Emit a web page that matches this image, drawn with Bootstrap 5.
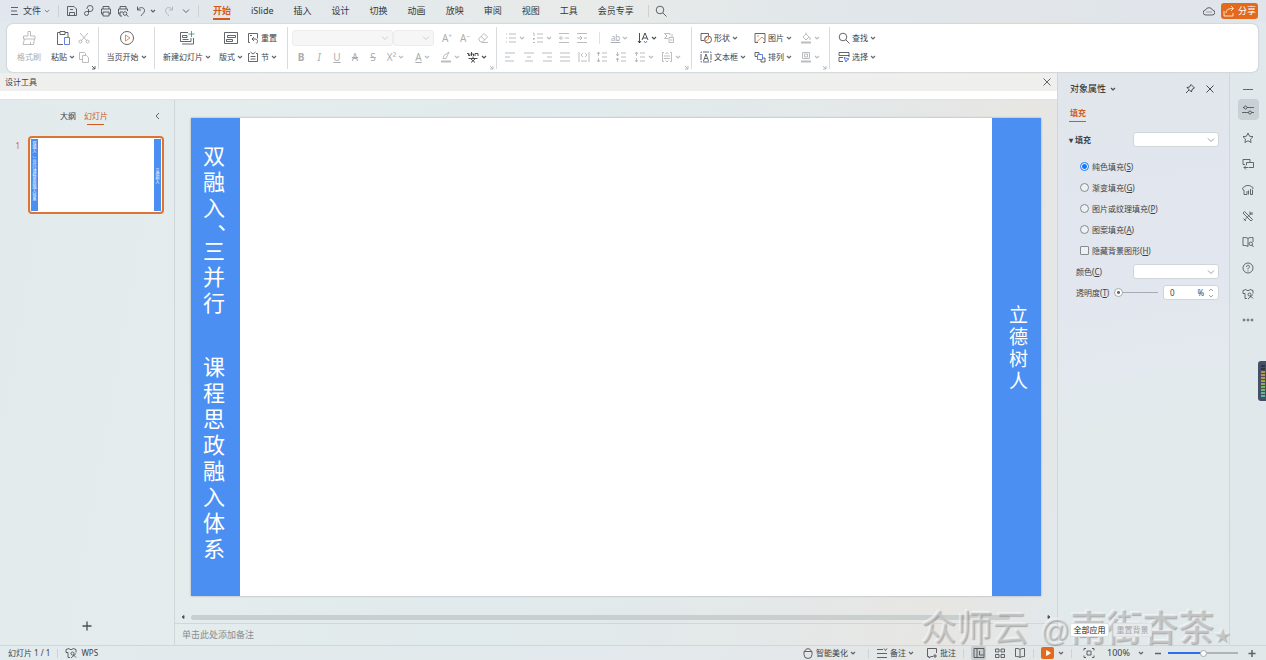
<!DOCTYPE html>
<html lang="zh-CN">
<head>
<meta charset="utf-8">
<meta name="viewport" content="width=device-width, initial-scale=1">
<title>WPS 演示</title>
<link rel="stylesheet" href="https://cdn.jsdelivr.net/npm/bootstrap@5.3.0/dist/css/bootstrap.min.css">
<style>
:root{--ink:#3d4247;--line:#d0d6da;--accent:#d05a1c;--blue:#4c8ff2}
body{font-family:"Noto Sans","Noto Sans CJK SC",sans-serif;font-size:8px;line-height:12px;color:var(--ink);
 background:linear-gradient(100deg,#e3eaed 0,#e4ecec 20%,#e1eaec 45%,#e4e8e9 62%,#e7e6e3 76%,#e1e8ec 86%,#e1e9eb 100%)}
button,input,select{font:inherit;color:inherit;line-height:inherit}
button{background:none;border:0;padding:0;display:inline-flex;align-items:center;justify-content:center;white-space:nowrap}
a{color:inherit;text-decoration:none}
svg{fill:none;stroke:currentColor;stroke-width:1;stroke-opacity:.8;flex:none;display:block}
.i12{width:12px;height:12px}.i14{width:14px;height:14px}.i16{width:16px;height:16px}.car{width:6px;height:6px}
.topbar{height:22px;font-size:9px;background:linear-gradient(90deg,#e2e6ee,#e2e8ec 25%,#e8ebe8 46%,#e2e7ea 62%,#e0e4eb)}
.topbar button{width:17px;height:20px}
.topbar .vline{width:1px;height:12px;background:#cbd1d6}
.topbar .filebtn{gap:3px}
.tab-link{padding:5px 10px 0;height:22px;position:relative;color:#34383c}
.tab-link.active,.pane-tab.active{color:var(--accent);font-weight:700}
.tab-link.active::after,.pane-tab.active::after{content:"";position:absolute;left:50%;bottom:2px;width:17px;height:2px;margin-left:-9px;background:var(--accent)}
.topbar .share{width:37px;height:16px;background:#e36a1c;color:#fff;border-radius:3px;gap:3px}
.ribbon{margin:2px 8px 1px 7px;height:48px;background:#fff;border-radius:6px;box-shadow:0 0 2px #aab0b5;position:relative;z-index:2}
.grp{border-right:1px solid #d9dcde;margin:3px 0;position:relative;padding-top:1px}
.grp:last-child{border:0}
.grp .launch{position:absolute;right:2px;bottom:-1px;width:5px;height:5px}
.rowx{height:19px;display:flex;align-items:center}
.stack{flex-direction:column;height:38px}
.stack>*{height:19px;display:flex;align-items:center;gap:2px}
.brushcmd{width:44px}
.c18{width:18px}.c27{width:27px;gap:2px}.dim{color:#aaadaf}
.lbl{gap:2px}.fill-row{width:129px}.shapes{width:54px}.glyphs{font-size:10px}
.g1{width:92px}.g2{width:56px}.g3{width:133px}.g4{width:209px}.g5{width:195px}.g6{width:138px}
.combo{appearance:none;height:16px;background:#f6f6f6;border:1px solid #ececec;border-radius:3px;width:100%}
.pick{position:relative}.pick svg{position:absolute;right:4px;top:50%;margin-top:-4px;width:8px;height:8px;color:#888}
.grp .pick svg{color:#c4c6c8}
.font-pick{width:101px}.size-pick{width:41px}
.designbar{height:18px;background:#efefee;padding:0 4px 0 5px}
.designstrip{height:9px;background:#fff;border-bottom:1px solid #dfe3e5}
.thumbs{width:175px;border-right:1px solid var(--line)}
.pane-tabs{padding:10px 10px 0 60px}
.pane-tab{position:relative;padding-bottom:6px}.pane-tab.active{font-weight:400}
.pane-tab.active::after{height:1px;bottom:3px}
.thumb-no{width:20px;color:var(--accent)}
.thumb{width:136px;height:78px;border:2px solid #dc7434;border-radius:4px;background:#fff;padding:1px}
.thumb i{display:block;width:7px;background:var(--blue);color:#fff;font-style:normal;font-size:4px;line-height:4px;text-align:center;padding-top:3px}
.thumb i span{display:block;width:4px;margin:0 auto;line-break:anywhere}
.canvas-area{padding:18px 16px 0}
.slide{aspect-ratio:850/478;background:#fff;box-shadow:0 0 2px #9aa3a8}
.band{width:49px;background:var(--blue);color:#fff}
.vtxt{width:22px;margin:0 15px 0 12px;font-size:22px;line-height:26px;line-break:anywhere}
.vtxt p{margin:0}.vtxt .pause{writing-mode:vertical-rl;line-height:22px;width:22px;height:17px;padding-top:4px}.vtxt .later{margin-top:38px}
.vtxt.small-v{width:20px;font-size:19px;line-height:22px;margin:0 13px 18px 17px}
.hbar{height:12px;padding:0 5px}.hbar .grip{height:5px;border-radius:3px;background:#c9cecf;width:819px;max-width:95%;margin-left:5px}
.notes{height:22px;border:0;border-top:1px solid var(--line);background:none;font-size:9px;padding:0 7px;width:100%}
.notes::placeholder{color:#888e91;opacity:1}
.props{width:172px;border-left:1px solid var(--line);background:linear-gradient(170deg,#e1e6ed,#e2e6ef 35%,#e3eaec 60%,#e1e9eb)}
.props-head{font-size:9px;color:#222;padding:10px 9px 0 12px}
.rail{width:37px;border-left:1px solid var(--line);background:#e1e8ec;padding-top:5px}
.rail button{width:21px;height:21px;border-radius:4px;margin-bottom:5px;color:#44494e}
.rail button.first{margin:0}
.rail button.on{background:#cbd0d6;margin-bottom:7px}
.opts{padding-top:6px}
.opt{height:21px;gap:3px;padding-left:22px}
.opt input{appearance:none;width:9px;height:9px;border:1px solid #858b91;border-radius:50%;margin:0;background:#edf1f3}
.opt input[type=checkbox]{border-radius:1px}
.opt input:checked{border-color:#1677ff;background:radial-gradient(circle,#1677ff 0 2px,#fff 3px)}
.field{height:21px;padding:0 10px 0 18px}.field.sub{padding-left:11px}
.box{appearance:none;height:15px;border:1px solid #cfd5d9;border-radius:3px;background:#fff;width:100%;display:block}
.pct{padding:0 6px;white-space:pre}
.pick .spin{height:12px;margin-top:-6px}
.w86{width:86px}.w56{width:56px}
.trans,.zoomer{appearance:none;height:9px;background:linear-gradient(#a6adb2,#a6adb2) center/100% 1px no-repeat;margin:0}
.trans{width:44px}.zoomer{width:70px;background:linear-gradient(90deg,#2d6fe8 50%,#aeb4b8 50%) center/100% 2px no-repeat}
.trans::-webkit-slider-thumb,.zoomer::-webkit-slider-thumb{appearance:none;width:9px;height:9px;border:1px solid #aaa;border-radius:50%;background:radial-gradient(circle,#666 0 1px,#fff 2px)}
.zoomer::-webkit-slider-thumb{width:7px;height:7px;background:#fff}
.apply{height:14px;width:39px;background:#fff;border:1px solid #dce1e4;border-radius:2px;color:#222}
.apply:disabled{background:#e7ebec;color:#a4a9ac}
.apply-row{position:relative;z-index:6}
.status{height:15px;border-top:1px solid var(--line);background:linear-gradient(90deg,#e2ebed,#e3e9ec 50%,#e4e6e6 75%,#e0e8ea)}
.status .vline{width:1px;height:9px;background:#ccd2d5;margin:0 7px}
.status .on{background:#c6cbcd;height:14px;width:15px;border-radius:2px}
.status .play{background:#e36a1c;color:#fff;width:13px;height:12px;border-radius:2px}
.pct-label{font-size:9px}
.wm{position:absolute;right:36px;bottom:4px;z-index:5;pointer-events:none;font-size:36px;line-height:40px;color:rgba(222,222,222,.45);text-shadow:1px 1px 1px rgba(110,110,110,.5),-1px -1px 0 rgba(250,250,250,.6);white-space:nowrap}
.wm .sign{margin-left:12px;font-weight:500;font-family:"Liberation Sans","Noto Sans CJK SC",sans-serif}
.wm .at{font-size:29px;font-weight:400}.wm .star{font-size:16px}
.meter{position:absolute;right:0;top:361px;width:8px;height:40px;background:#465064;border-radius:3px 0 0 3px;z-index:5;padding:4px 1px 4px 3px}
.meter::before{content:"";display:block;height:32px;background:repeating-linear-gradient(transparent 0 2px,#465064 2px 3px),linear-gradient(#2e3546 18%,#c08a4a 19%,#b0a04a 45%,#7fb35c 68%,#42c3ae)}
</style>
</head>
<body class="vh-100 d-flex flex-column overflow-hidden position-relative">
<svg width="0" height="0" class="position-absolute" aria-hidden="true">
<symbol id="car" viewBox="0 0 6 6"><path d="M1 2l2 2 2-2" stroke-width="1.2"/></symbol>
<symbol id="chev" viewBox="0 0 8 8"><path d="M1 2.500l3 3 3-3"/></symbol>
<symbol id="launch" viewBox="0 0 5 5"><path d="M1 1l3 3M4 1v3H1"/></symbol>
<symbol id="menu" viewBox="0 0 12 12"><path d="M3 2.500h7M3 6h6M3 9.500h7"/></symbol>
<symbol id="save" viewBox="0 0 12 12"><path d="M1.500 1.500h6.500l2.500 2.500v6.500h-9zM3.500 10.500v-3h5v3M4 4.500h3"/></symbol>
<symbol id="pdf" viewBox="0 0 12 12"><path d="M4 4V3.500A3 3 0 1 1 7 6.500H3.500a2 2 0 1 0 2 2V4"/></symbol>
<symbol id="print" viewBox="0 0 12 12"><path d="M3 4V1.500h6V4M3 9H1.500V4h9v5H9M3 7h6v4H3z"/></symbol>
<symbol id="preview" viewBox="0 0 12 12"><path d="M3 4V1.500h6V4M3 9H1.500V4h9v2M3 11V7h3M5 11H3"/><circle cx="8" cy="8.500" r="1.800"/><path d="M9.500 10l2 1.500"/></symbol>
<symbol id="undo" viewBox="0 0 12 12"><path d="M2.500 1.500v3.500H6M2.500 5c2-3.500 7-3 7 .5C9.500 8 7 9 6 11"/></symbol>
<symbol id="search" viewBox="0 0 12 12"><circle cx="5" cy="5" r="3.800"/><path d="M8 8l3.500 3.500"/></symbol>
<symbol id="cloud" viewBox="0 0 12 12"><path d="M3 10a2.500 2.500 0 0 1-.5-5 3.800 3.800 0 0 1 7 0A2.500 2.500 0 0 1 9 10z"/><path d="M3.500 7h1M5.500 7h1M7.500 7h1"/></symbol>
<symbol id="share" viewBox="0 0 12 12"><path d="M1 6v5h9V8M3 8c0-3 2-4.500 7-4.500M8 1l2.500 2.500L8 6"/></symbol>
<symbol id="brush" viewBox="0 0 16 16"><path d="M7 1.500h2.500V6h4.500v3H2.500V6H7zM3.500 9L2 14.500h10.500L13.500 9M9.500 12v2.500"/></symbol>
<symbol id="paste" viewBox="0 0 16 16"><path d="M8 14.500H2.500v-12H5M10 2.500h3V7M5 1.500h5v3H5z"/><path stroke="#3d63d8" d="M9.500 7.500h5v7h-5z"/></symbol>
<symbol id="cut" viewBox="0 0 12 12"><path d="M2 1l7 8M10 1L3 9"/><circle cx="2.500" cy="9.500" r="1.500"/><circle cx="9.500" cy="9.500" r="1.500"/></symbol>
<symbol id="copy" viewBox="0 0 12 12"><path d="M4 8.500H1.500v-7h5l1 1V4M4.500 4.500h4l2 2v5h-6z"/></symbol>
<symbol id="playc" viewBox="0 0 16 16"><circle cx="8" cy="8" r="6.500"/><path stroke="#e0703a" d="M6.500 5v6l4.500-3z"/></symbol>
<symbol id="newslide" viewBox="0 0 16 16"><path d="M9 2.500H1.500v9h10.500V8M3.500 5.500H8v2H3.500zM3.500 9.500h6M3 14h11.500V8"/><path stroke="#209a63" d="M12.500 1v6M9.500 4h6"/></symbol>
<symbol id="layout" viewBox="0 0 16 16"><path d="M1.500 2.500h13v11h-13zM4.500 5.500h8v2h-8zM3.500 9.500h6v2h-6z"/></symbol>
<symbol id="reset" viewBox="0 0 12 12"><path d="M3 10.500H1.500v-9h9v5M3 3.500h2M7 5L5 7l2 2M5 7h3c3 0 3 3 1.500 4.500"/></symbol>
<symbol id="section" viewBox="0 0 12 12"><path d="M3 2.500H1.500v8h9v-8H9M3.500 1L6 3l2.500-2M3.500 5.500h5M3.500 8h5"/></symbol>
<symbol id="eraser" viewBox="0 0 12 12"><path d="M1.500 7L7 1.500l3.500 3.500L5.500 10h-2zM4 4.500L8 8M5 10.500h6"/></symbol>
<symbol id="bul" viewBox="0 0 12 12"><path d="M4 2h7M4 6h7M4 10h7M1 2h1M1 6h1M1 10h1"/></symbol>
<symbol id="num" viewBox="0 0 12 12"><path d="M5 2h6M5 6h6M5 10h6M1 1h1v3M1 6.500h2L1 8M1 10.500h2"/></symbol>
<symbol id="out" viewBox="0 0 12 12"><path d="M1 1.500h10M7 6h4M1 10.500h10M5.500 6H1.500M3.500 4l-2 2 2 2"/></symbol>
<symbol id="ind" viewBox="0 0 12 12"><path d="M1 1.500h10M8 6h3M1 10.500h10M1 6h5M4 4l2 2-2 2"/></symbol>
<symbol id="al" viewBox="0 0 12 12"><path d="M1 2h10M1 6h5M1 10h9"/></symbol>
<symbol id="ac" viewBox="0 0 12 12"><path d="M1 2h10M4 6h4M2 10h8"/></symbol>
<symbol id="ar" viewBox="0 0 12 12"><path d="M1 2h10M6 6h5M2 10h9"/></symbol>
<symbol id="aj" viewBox="0 0 12 12"><path d="M1 2h10M1 6h10M1 10h10"/></symbol>
<symbol id="memo" viewBox="0 0 12 12"><path d="M1 2.500h6M1 6.500h10M1 10.500h10M8 1.500l1.500 2 1.500-2"/></symbol>
<symbol id="ad" viewBox="0 0 12 12"><path d="M1 1v10M11 1v10M3 10h6M5 2L3 4l2 2M7 2l2 2-2 2"/></symbol>
<symbol id="lsp" viewBox="0 0 12 12"><path d="M6 2h5M6 6h5M6 10h5M2.500 1v4M1 3l1.500-2L4 3M2.500 7v4M1 9l1.500 2L4 9"/></symbol>
<symbol id="lsq" viewBox="0 0 12 12"><path d="M6 2h5M6 6h5M6 10h5M2.500 1v4M1 3l1.500 2L4 3M2.500 7v4M1 9l1.500-2L4 9"/></symbol>
<symbol id="conv" viewBox="0 0 12 12"><path d="M7 3V1.500H1.500L4 4 1.500 6.500H5M6 5.500h4.500v5H6zM9 2v3M7 8h2.500"/></symbol>
<symbol id="brk" viewBox="0 0 12 12"><path d="M3 1.500H1.500v9H3M9 1.500h1.500v9H9M3 5h6M3 7.500h6M4.500 3L6 1.500 7.500 3M4.500 9.500L6 11l1.500-1.500"/></symbol>
<symbol id="shape" viewBox="0 0 12 12"><path d="M4 8.500H1v-7h7.500V4"/><circle cx="8" cy="7.500" r="3.500"/><path stroke="#e0703a" d="M8.500 3.500V7L5 9.500V7z"/></symbol>
<symbol id="pic" viewBox="0 0 12 12"><path d="M4 10.500H1v-9h10v9H9"/><path stroke="#e0703a" d="M2.500 10L8 5l3 3M3 4h2"/></symbol>
<symbol id="tbox" viewBox="0 0 12 12"><path d="M3.500 10L6 3l2.500 7M4.500 7.500h3"/><path d="M1 3v6M11 3v6M3 1h6M3 11h6"/><path stroke="#3d63d8" d="M1 2V1h1M10 1h1v1M1 10v1h1M10 11h1v-1"/></symbol>
<symbol id="arr" viewBox="0 0 12 12"><path d="M3 5.500H1v-4h4V3M9 7h2v4H7V9"/><path stroke="#3d63d8" d="M3.500 3.500h5v5h-5z"/></symbol>
<symbol id="bucket" viewBox="0 0 12 12"><path d="M3 5l3-3 3 3-3 3zM6 2V.5M10 5v3"/><path d="M1 10.500h10" stroke-width="2"/></symbol>
<symbol id="frame" viewBox="0 0 12 12"><path d="M2.500 1.500h7v6h-7zM4.500 3h3v3h-3z"/><path d="M1 10.500h10" stroke-width="2"/></symbol>
<symbol id="sel" viewBox="0 0 12 12"><path d="M1 1.500h10v3H1zM5 10.500H1v-4h4M11 4v2"/><path stroke="#3d63d8" d="M6 6.500l5 1.500-2 1-1 2z"/></symbol>
<symbol id="x" viewBox="0 0 12 12"><path d="M2.500 2.500l7 7M9.500 2.500l-7 7"/></symbol>
<symbol id="pin" viewBox="0 0 12 12"><path d="M7 1.500L10.500 5 8 6.500 7.500 9 3 4.500 5.500 4zM5 7l-3 3"/></symbol>
<symbol id="sliders" viewBox="0 0 12 12"><path d="M5 3.500h7M1 3.500h1M0 8.500h6.500M9.500 8.500H12"/><circle cx="3.500" cy="3.500" r="1.500"/><circle cx="8" cy="8.500" r="1.500"/></symbol>
<symbol id="star" viewBox="0 0 12 12"><path d="M6 1l1.500 3.200 3.500.5-2.500 2.400.6 3.400L6 8.800l-3.100 1.700.6-3.400L1 4.700l3.500-.5z"/></symbol>
<symbol id="swap" viewBox="0 0 12 12"><path d="M3 6.500H1v-5h7V4M4.500 4.500h7v5h-5M4.500 4.500V7M2 9.500h4M4 7.500l-2 2 2 2"/></symbol>
<symbol id="pens" viewBox="0 0 12 12"><path d="M2 6C0 6 0 3 2.500 3c0-2 7-2 7 0C12 3 11 5 10 5.500M2 6v4.500h3V7M6.500 6.500v4M8.500 5v5.500h2V6"/></symbol>
<symbol id="tools" viewBox="0 0 12 12"><path d="M2.500 1.500l8 8-1.500 1.500-8-8zM10.500 2L2 10.500M8 1.500v2.500h3M1.500 8.500L4 11"/></symbol>
<symbol id="book" viewBox="0 0 12 12"><path d="M6 10.500c-1-1-3-1-5-1v-8c2 0 4 0 5 1 1-1 3-1 5-1V6M6 2.500v8"/><circle cx="8.800" cy="7.800" r="1.700"/><path d="M10 9l1.500 2"/></symbol>
<symbol id="readb" viewBox="0 0 12 12"><path d="M6 10.500c-1-1-3-1-4.500-1v-8c2 0 3.500 0 4.500 1 1-1 2.500-1 4.500-1v8c-1.500 0-3.500 0-4.500 1v-8"/></symbol>
<symbol id="help" viewBox="0 0 12 12"><circle cx="6" cy="6" r="5"/><path d="M4.500 5c0-2.500 3.500-2 3 0L6 6.500v1M6 8.500v1"/></symbol>
<symbol id="shirt" viewBox="0 0 12 12"><path d="M5 10.500H3V5.500H1v-3l3-1c1 1.500 3 1.500 4 0l3 1v3"/><circle cx="7.500" cy="6.500" r="1.500"/><path d="M8.500 8l2.500 2.500M6 11l5-4.500"/></symbol>
<symbol id="dots" viewBox="0 0 12 12"><circle cx="2" cy="6" r="1"/><circle cx="6" cy="6" r="1"/><circle cx="10" cy="6" r="1"/></symbol>
<symbol id="smart" viewBox="0 0 12 12"><path d="M2 4.500h8v3a4 4 0 0 1-8 0zM3 4c0-3 6-3 6 0"/></symbol>
<symbol id="chat" viewBox="0 0 12 12"><path d="M7 9.500H5L3 11V9.500H1.500v-8h9V6M9 7v4M7 9h4"/></symbol>
<symbol id="normal" viewBox="0 0 12 12"><path d="M1 1.500h10v9H1zM4 1.500v9M6.500 4v4h4"/></symbol>
<symbol id="grid4" viewBox="0 0 12 12"><path d="M1.500 2h3.500v3H1.500zM7 2h3.500v3H7zM1.500 7.500h3.500v3H1.500zM7 7.500h3.500v3H7z"/></symbol>
<symbol id="fit" viewBox="0 0 12 12"><path d="M1 3.500v-2h2M9 1.500h2v2M11 8.500v2H9M3 10.500H1v-2M4 4h4v4H4z"/></symbol>
</svg>

<header class="topbar d-flex align-items-center flex-shrink-0">
 <button class="filebtn ms-2 w-auto" aria-label="文件"><svg class="i12"><use href="#menu"/></svg><span>文件</span><svg class="car"><use href="#chev"/></svg></button>
 <span class="vline ms-2 me-1"></span>
 <button aria-label="保存"><svg class="i12"><use href="#save"/></svg></button>
 <button aria-label="输出PDF"><svg class="i12"><use href="#pdf"/></svg></button>
 <button aria-label="打印"><svg class="i12"><use href="#print"/></svg></button>
 <button aria-label="预览"><svg class="i12"><use href="#preview"/></svg></button>
 <button class="filebtn ms-1 me-1 w-auto" aria-label="撤销"><svg class="i12"><use href="#undo"/></svg><svg class="car"><use href="#car"/></svg></button>
 <button class="dim" aria-label="恢复"><svg class="i12"><use href="#undo" transform="translate(12 0) scale(-1 1)"/></svg></button>
 <button aria-label="更多"><svg width="8" height="8"><use href="#chev"/></svg></button>
 <span class="vline ms-1 me-1"></span>
 <nav class="d-flex">
  <a href="#" class="tab-link active">开始</a><a href="#" class="tab-link">iSlide</a><a href="#" class="tab-link">插入</a><a href="#" class="tab-link">设计</a><a href="#" class="tab-link">切换</a><a href="#" class="tab-link">动画</a><a href="#" class="tab-link">放映</a><a href="#" class="tab-link">审阅</a><a href="#" class="tab-link">视图</a><a href="#" class="tab-link">工具</a><a href="#" class="tab-link">会员专享</a>
 </nav>
 <span class="vline ms-1 me-1"></span>
 <button aria-label="搜索"><svg class="i12"><use href="#search"/></svg></button>
 <button class="ms-auto me-1" aria-label="云"><svg class="i12"><use href="#cloud"/></svg></button>
 <button class="share me-2"><svg class="i12"><use href="#share"/></svg>分享</button>
</header>

<div class="ribbon d-flex flex-shrink-0">
 <div class="grp g1 d-flex">
  <button class="stack brushcmd dim"><span><svg class="i16"><use href="#brush"/></svg></span><span>格式刷</span></button>
  <button class="stack"><span><svg class="i16"><use href="#paste"/></svg></span><span>粘贴<svg class="car"><use href="#car"/></svg></span></button>
  <div class="dim"><div class="rowx"><button class="c18" aria-label="剪切"><svg class="i12"><use href="#cut"/></svg></button></div><div class="rowx"><button class="c18" aria-label="复制"><svg class="i12"><use href="#copy"/></svg></button></div></div>
  <svg class="launch"><use href="#launch"/></svg>
 </div>
 <div class="grp g2 d-flex justify-content-center">
  <button class="stack"><span><svg class="i16"><use href="#playc"/></svg></span><span>当页开始<svg class="car"><use href="#car"/></svg></span></button>
 </div>
 <div class="grp g3 d-flex ps-2">
  <button class="stack"><span><svg class="i16"><use href="#newslide"/></svg></span><span>新建幻灯片<svg class="car"><use href="#car"/></svg></span></button>
  <button class="stack ms-2"><span><svg class="i16"><use href="#layout"/></svg></span><span>版式<svg class="car"><use href="#car"/></svg></span></button>
  <div class="ms-1"><div class="rowx"><button class="lbl"><svg class="i12"><use href="#reset"/></svg>重置</button></div><div class="rowx"><button class="lbl"><svg class="i12"><use href="#section"/></svg>节<svg class="car"><use href="#car"/></svg></button></div></div>
 </div>
 <div class="grp g4 dim ps-1">
  <div class="rowx glyphs">
   <div class="pick font-pick"><select class="combo" disabled aria-label="字体"></select><svg><use href="#chev"/></svg></div>
   <div class="pick size-pick"><select class="combo" disabled aria-label="字号"></select><svg><use href="#chev"/></svg></div>
   <button class="c18 ms-1">A⁺</button><button class="c18">A⁻</button><button class="c18" aria-label="清除格式"><svg class="i12"><use href="#eraser"/></svg></button>
  </div>
  <div class="rowx glyphs">
   <button class="c18"><b>B</b></button><button class="c18"><i>I</i></button><button class="c18"><u>U</u></button><button class="c18"><s>A</s></button><button class="c18"><s>S</s></button>
   <button class="c27">X²<svg class="car"><use href="#car"/></svg></button><button class="c27"><u>A</u><svg class="car"><use href="#car"/></svg></button>
   <button class="c27" aria-label="突出显示"><svg class="i12"><path d="M3 7.500l1-3 5-3.500-3 6.500z"/><path d="M1 10.500h10" stroke-width="2"/></svg><svg class="car"><use href="#car"/></svg></button>
   <button class="c27 text-dark" aria-label="拼音"><svg class="i12"><path d="M0 2.500h1.500v2H3v-2M4.500 5V1M4.500 3h2v2M8 5V2.500h3V5M6 5.500v2M1.500 7.500h9M4 8l4 3.500M8 8l-4 3.500"/></svg><svg class="car"><use href="#car"/></svg></button>
  </div>
  <svg class="launch"><use href="#launch"/></svg>
 </div>
 <div class="grp g5 dim ps-1">
  <div class="rowx">
   <button class="c27" aria-label="项目符号"><svg class="i12"><use href="#bul"/></svg><svg class="car"><use href="#car"/></svg></button><button class="c27" aria-label="编号"><svg class="i12"><use href="#num"/></svg><svg class="car"><use href="#car"/></svg></button>
   <button class="c18" aria-label="减少缩进"><svg class="i12"><use href="#out"/></svg></button><button class="c18" aria-label="增加缩进"><svg class="i12"><use href="#ind"/></svg></button>
   <span class="border-start ms-2 me-1">&nbsp;</span>
   <button class="c27"><span class="text-decoration-underline">ab</span><svg class="car"><use href="#car"/></svg></button>
   <button class="c27 text-dark" aria-label="文字方向"><svg class="i12"><path d="M2.500 1v10M1 9l1.500 2L4 9M5 8l3-7 3 7M6 6h4"/><path stroke="#3d63d8" d="M7 9l1.500 2L10 9"/></svg><svg class="car"><use href="#car"/></svg></button>
   <button class="c18" aria-label="转换"><svg class="i12"><use href="#conv"/></svg></button>
  </div>
  <div class="rowx">
   <div class="fill-row d-flex">
    <button class="flex-fill" aria-label="左对齐"><svg class="i12"><use href="#al"/></svg></button><button class="flex-fill" aria-label="居中"><svg class="i12"><use href="#ac"/></svg></button><button class="flex-fill" aria-label="右对齐"><svg class="i12"><use href="#ar"/></svg></button><button class="flex-fill" aria-label="两端对齐"><svg class="i12"><use href="#aj"/></svg></button><button class="flex-fill" aria-label="分散对齐"><svg class="i12"><use href="#ad"/></svg></button><button class="flex-fill" aria-label="增加间距"><svg class="i12"><use href="#lsp"/></svg></button><button class="flex-fill" aria-label="减少间距"><svg class="i12"><use href="#lsq"/></svg></button>
   </div>
   <button class="c27" aria-label="行距"><svg class="i12"><use href="#lsp"/></svg><svg class="car"><use href="#car"/></svg></button><button class="c27" aria-label="对齐文本"><svg class="i12"><use href="#brk"/></svg><svg class="car"><use href="#car"/></svg></button>
  </div>
  <svg class="launch"><use href="#launch"/></svg>
 </div>
 <div class="grp g6 ps-2 d-flex">
  <div class="shapes"><div class="rowx"><button class="lbl"><svg class="i12"><use href="#shape"/></svg>形状<svg class="car"><use href="#car"/></svg></button></div><div class="rowx"><button class="lbl"><svg class="i12"><use href="#tbox"/></svg>文本框<svg class="car"><use href="#car"/></svg></button></div></div>
  <div><div class="rowx"><button class="lbl"><svg class="i12"><use href="#pic"/></svg>图片<svg class="car"><use href="#car"/></svg></button></div><div class="rowx"><button class="lbl"><svg class="i12"><use href="#arr"/></svg>排列<svg class="car"><use href="#car"/></svg></button></div></div>
  <div class="dim ms-1"><div class="rowx"><button class="c27" aria-label="填充"><svg class="i12"><use href="#bucket"/></svg><svg class="car"><use href="#car"/></svg></button></div><div class="rowx"><button class="c27" aria-label="轮廓"><svg class="i12"><use href="#frame"/></svg><svg class="car"><use href="#car"/></svg></button></div></div>
  <svg class="launch dim"><use href="#launch"/></svg>
 </div>
 <div class="grp ps-2">
  <div class="rowx"><button class="lbl"><svg class="i12"><use href="#search"/></svg>查找<svg class="car"><use href="#car"/></svg></button></div>
  <div class="rowx"><button class="lbl"><svg class="i12"><use href="#sel"/></svg>选择<svg class="car"><use href="#car"/></svg></button></div>
 </div>
</div>

<main class="d-flex flex-grow-1 overflow-hidden">
 <div class="d-flex flex-column flex-grow-1 overflow-hidden">
  <div class="designbar d-flex align-items-center justify-content-between flex-shrink-0"><span>设计工具</span><button aria-label="关闭"><svg class="i12"><use href="#x"/></svg></button></div>
  <div class="designstrip flex-shrink-0"></div>
  <div class="d-flex flex-grow-1 overflow-hidden">
   <aside class="thumbs d-flex flex-column flex-shrink-0">
    <div class="pane-tabs d-flex align-items-start">
     <a href="#" class="pane-tab">大纲</a><a href="#" class="pane-tab active ms-2">幻灯片</a>
     <button class="ms-auto" aria-label="收起"><svg class="i12"><path d="M7 3L4 6l3 3"/></svg></button>
    </div>
    <div class="d-flex mt-2">
     <span class="thumb-no text-end pt-1">1</span>
     <div class="thumb d-flex justify-content-between ms-2"><i><span>双融入、三并行　课程思政融入体系</span></i><i class="d-flex align-items-center"><span>立德树人</span></i></div>
    </div>
    <button class="mt-auto mb-2 mx-auto text-dark p-1" aria-label="新建幻灯片"><svg class="i14"><path d="M7 2.500v9M2.500 7h9" stroke-width="1.300"/></svg></button>
   </aside>
   <section class="d-flex flex-column flex-grow-1 overflow-hidden">
    <div class="canvas-area flex-grow-1">
     <div class="slide d-flex justify-content-between">
      <div class="band pt-4"><div class="vtxt"><p>双融入</p><p class="pause">、</p><p>三并行</p><p class="later">课程思政融入体系</p></div></div>
      <div class="band d-flex align-items-center"><div class="vtxt small-v"><p>立德树人</p></div></div>
     </div>
    </div>
    <div class="hbar d-flex align-items-center flex-shrink-0"><svg class="car"><path d="M4 1.500L2 3l2 1.500z" fill="#666"/></svg><div class="grip"></div><svg class="car ms-auto"><path d="M2 1.500L4 3 2 4.500z" fill="#666"/></svg></div>
    <input class="notes flex-shrink-0" placeholder="单击此处添加备注" aria-label="备注">
   </section>
  </div>
 </div>
 <aside class="props d-flex flex-column flex-shrink-0">
  <div class="props-head d-flex align-items-center"><span class="me-1">对象属性</span><svg class="car"><use href="#car"/></svg><button class="ms-auto me-2" aria-label="固定"><svg class="i12"><use href="#pin"/></svg></button><button class="me-1" aria-label="关闭"><svg class="i12"><use href="#x"/></svg></button></div>
  <div class="ps-2 mt-2 pt-1 ms-1"><a href="#" class="pane-tab active d-inline-block fw-bold">填充</a></div>
  <div class="d-flex align-items-center justify-content-between field sub mt-1"><b>▾ 填充</b><div class="pick w86"><select class="box" aria-label="填充样式"></select><svg><use href="#chev"/></svg></div></div>
  <div class="opts">
   <label class="opt d-flex align-items-center"><input type="radio" name="f" checked><span>纯色填充(<u>S</u>)</span></label>
   <label class="opt d-flex align-items-center"><input type="radio" name="f"><span>渐变填充(<u>G</u>)</span></label>
   <label class="opt d-flex align-items-center"><input type="radio" name="f"><span>图片或纹理填充(<u>P</u>)</span></label>
   <label class="opt d-flex align-items-center"><input type="radio" name="f"><span>图案填充(<u>A</u>)</span></label>
   <label class="opt d-flex align-items-center"><input type="checkbox"><span>隐藏背景图形(<u>H</u>)</span></label>
  </div>
  <div class="field d-flex align-items-center justify-content-between"><label for="clr">颜色(<u>C</u>)</label><div class="pick w86"><select id="clr" class="box"></select><svg><use href="#chev"/></svg></div></div>
  <div class="field d-flex align-items-center justify-content-between"><label for="tr">透明度(<u>T</u>)</label><input id="tr" class="trans" type="range" value="0"><div class="pick w56"><input class="box pct" value="0           %" aria-label="透明度百分比"><svg class="spin" viewBox="0 0 8 12"><path d="M2 4l2-2 2 2M2 8l2 2 2-2"/></svg></div></div>
  <div class="apply-row mt-auto d-flex gap-1 ps-2 pb-2 ms-1"><button class="apply">全部应用</button><button class="apply" disabled>重置背景</button></div>
 </aside>
 <nav class="rail d-flex flex-column align-items-center flex-shrink-0">
  <button class="first" aria-label="折叠"><svg class="i12"><path d="M1 6.500h10"/></svg></button>
  <button class="on" aria-label="属性"><svg class="i12"><use href="#sliders"/></svg></button>
  <button aria-label="动画"><svg class="i12"><use href="#star"/></svg></button>
  <button aria-label="切换"><svg class="i12"><use href="#swap"/></svg></button>
  <button aria-label="样式"><svg class="i12"><use href="#pens"/></svg></button>
  <button aria-label="工具"><svg class="i12"><use href="#tools"/></svg></button>
  <button aria-label="查阅"><svg class="i12"><use href="#book"/></svg></button>
  <button aria-label="帮助"><svg class="i12"><use href="#help"/></svg></button>
  <button aria-label="皮肤"><svg class="i12"><use href="#shirt"/></svg></button>
  <button aria-label="更多"><svg class="i12"><use href="#dots"/></svg></button>
 </nav>
</main>

<footer class="status d-flex align-items-center flex-shrink-0 ps-2">
 <span>幻灯片 1 / 1</span><span class="vline"></span><button><svg class="i12 me-1"><use href="#shirt"/></svg>WPS</button>
 <div class="ms-auto d-flex align-items-center">
  <button class="lbl me-1"><svg class="i12"><use href="#smart"/></svg>智能美化<svg class="car"><use href="#car"/></svg></button><span class="vline ms-2"></span>
  <button class="lbl"><svg class="i12"><use href="#memo"/></svg>备注<svg class="car"><use href="#car"/></svg></button>
  <button class="lbl ms-2 ps-1"><svg class="i12"><use href="#chat"/></svg>批注</button><span class="vline"></span>
  <button class="on" aria-label="普通视图"><svg class="i12"><use href="#normal"/></svg></button><button class="ms-2" aria-label="浏览"><svg class="i12"><use href="#grid4"/></svg></button><button class="ms-2" aria-label="阅读"><svg class="i12"><use href="#readb"/></svg></button><span class="vline"></span>
  <button class="play" aria-label="播放"><svg width="8" height="8"><path d="M2.500 1.500v5L6.500 4z" fill="#fff"/></svg></button><svg class="car ms-1"><use href="#car"/></svg><span class="vline"></span>
  <button class="ms-1" aria-label="适应"><svg class="i12"><use href="#fit"/></svg></button><span class="pct-label ms-2 ps-1">100%</span><svg class="car ms-2"><use href="#car"/></svg>
  <button class="ms-2" aria-label="缩小"><svg class="i12"><path d="M3 6.500h6" stroke-width="1.500"/></svg></button><input class="zoomer ms-1" type="range" value="50" aria-label="缩放"><button class="ms-2 me-2" aria-label="放大"><svg class="i12"><path d="M6 3v7M2.500 6.500h7" stroke-width="1.500"/></svg></button>
 </div>
</footer>

<div class="wm">众师云<span class="sign"><span class="at">@</span>南街杏茶<span class="star">★</span></span></div>
<div class="meter"></div>
<script src="https://cdn.jsdelivr.net/npm/bootstrap@5.3.0/dist/js/bootstrap.bundle.min.js"></script>
</body>
</html>
